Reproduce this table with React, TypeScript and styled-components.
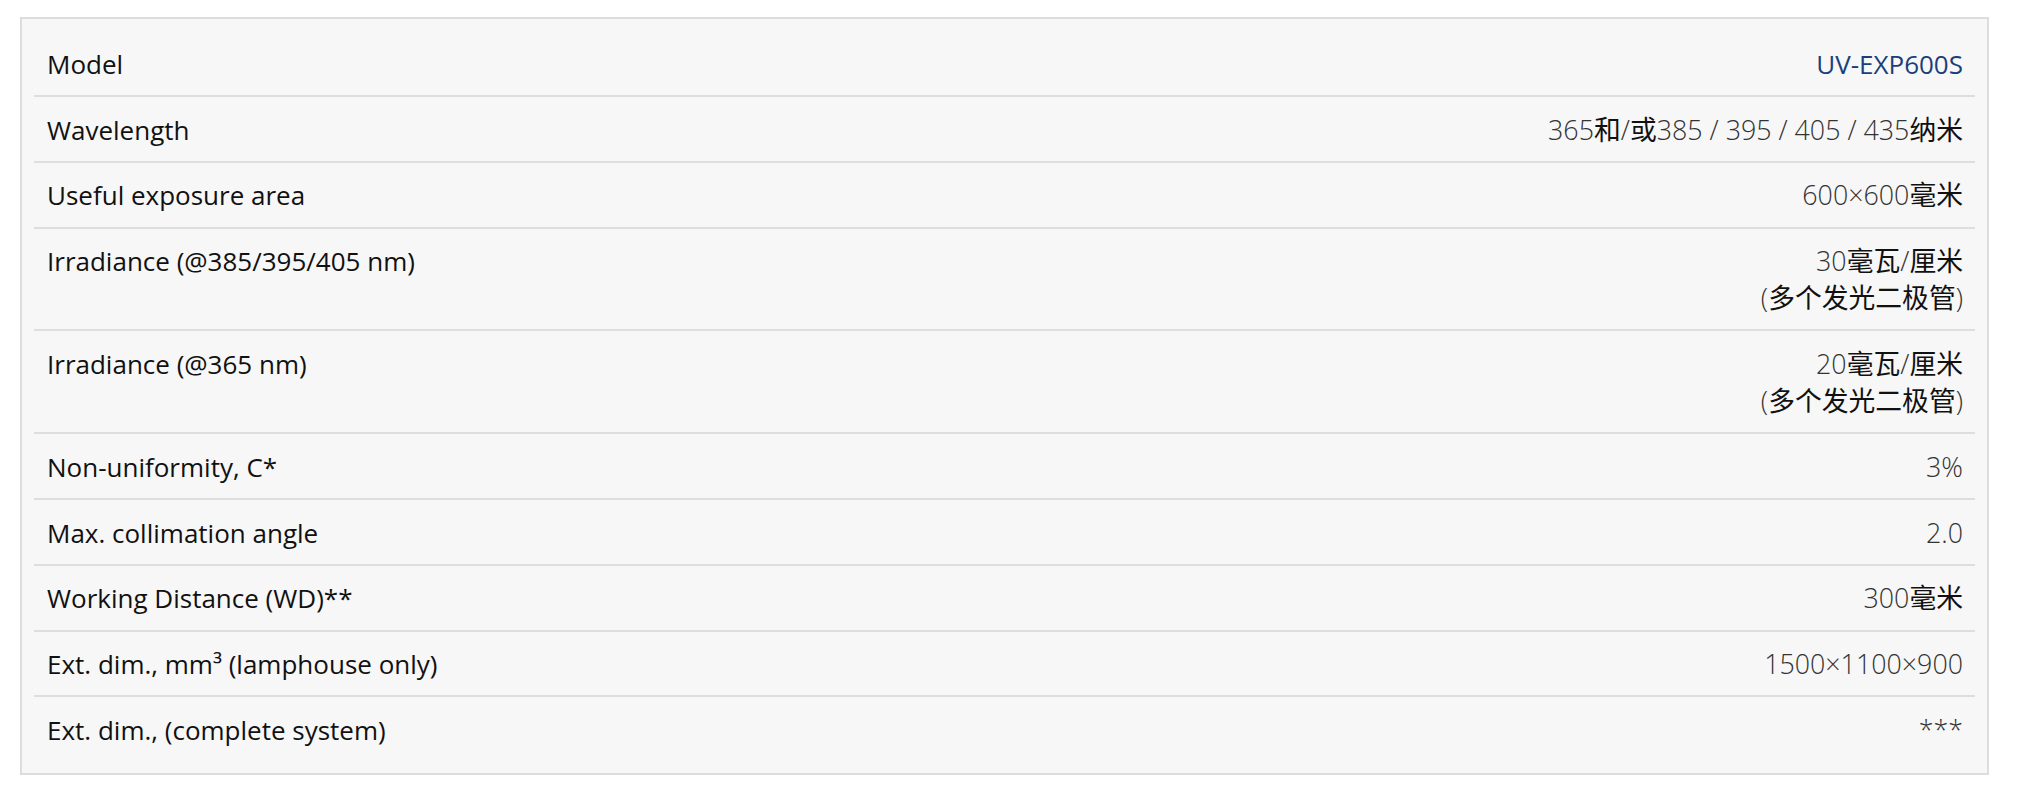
import React from 'react';
import styled, { createGlobalStyle } from 'styled-components';

type SpecRow = {
  label: string;
  value: React.ReactNode;
  accent?: boolean;
};

// digits in the value column are light, the CJK units fall back to the regular CJK face
const Cn = styled.span`
  font-family: 'Noto Sans CJK SC', sans-serif;
  font-weight: 400;
  color: #111;
  line-height: 1;
`;

const specs: SpecRow[] = [
  { label: 'Model', value: 'UV-EXP600S', accent: true },
  {
    label: 'Wavelength',
    value: (
      <>
        365<Cn>和</Cn>/<Cn>或</Cn>385 / 395 / 405 / 435<Cn>纳米</Cn>
      </>
    ),
  },
  {
    label: 'Useful exposure area',
    value: (
      <>
        600×600<Cn>毫米</Cn>
      </>
    ),
  },
  {
    label: 'Irradiance (@385/395/405 nm)',
    value: (
      <>
        30<Cn>毫瓦</Cn>/<Cn>厘米</Cn>
        <br />
        (<Cn>多个发光二极管</Cn>)
      </>
    ),
  },
  {
    label: 'Irradiance (@365 nm)',
    value: (
      <>
        20<Cn>毫瓦</Cn>/<Cn>厘米</Cn>
        <br />
        (<Cn>多个发光二极管</Cn>)
      </>
    ),
  },
  { label: 'Non-uniformity, C*', value: '3%' },
  { label: 'Max. collimation angle', value: '2.0' },
  {
    label: 'Working Distance (WD)**',
    value: (
      <>
        300<Cn>毫米</Cn>
      </>
    ),
  },
  { label: 'Ext. dim., mm³ (lamphouse only)', value: '1500×1100×900' },
  { label: 'Ext. dim., (complete system)', value: '***' },
];

export default function App() {
  return (
    <>
      <GlobalStyle />
      <Table>
        {specs.map((row) => (
          <Row key={row.label}>
            <Label>{row.label}</Label>
            <Value accent={row.accent}>{row.value}</Value>
          </Row>
        ))}
      </Table>
    </>
  );
}

const GlobalStyle = createGlobalStyle`
  body {
    margin: 0;
    background: #fff;
    font-family: 'Open Sans', 'Noto Sans CJK SC', sans-serif;
  }
`;

const Table = styled.div`
  box-sizing: border-box;
  width: 1969px;
  margin: 17px 0 12px 20px;
  padding: 12px;
  background: #f7f7f7;
  border: 2px solid #dddddd;
`;

const Row = styled.div`
  display: flex;
  justify-content: space-between;
  align-items: flex-start;
  padding: 14.7px 12px 12.4px 13px;
  border-bottom: 2px solid #dedede;
  line-height: 36.8px;

  &:last-child {
    border-bottom: none;
  }
`;

const Label = styled.div`
  color: #111;
  font-size: 26px;
  font-weight: 400;
`;

const Value = styled.div<{ accent?: boolean }>`
  text-align: right;
  white-space: nowrap;
  font-size: ${(p) => (p.accent ? '26px' : '26.8px')};
  color: ${(p) => (p.accent ? '#1b3f7c' : '#333')};
  font-weight: ${(p) => (p.accent ? 400 : 300)};
`;
